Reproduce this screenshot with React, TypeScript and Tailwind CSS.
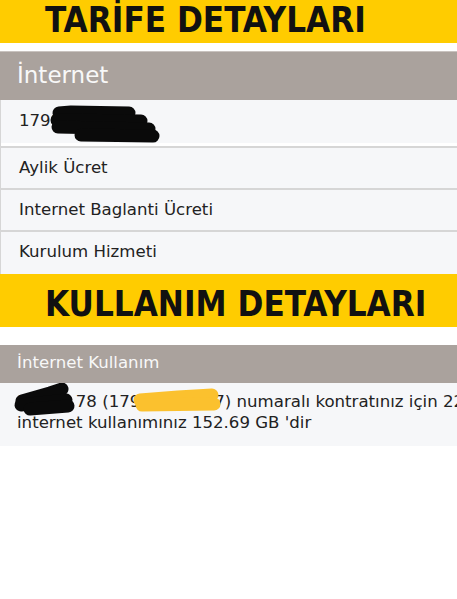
import React from "react";

const body = { fontFamily: '"DejaVu Sans", Verdana, sans-serif' };
const title = { fontFamily: '"DejaVu Sans Condensed", "DejaVu Sans", sans-serif', fontStretch: "condensed" as const };

function Row({ children, className = "" }: { children: React.ReactNode; className?: string }) {
  return (
    <div
      className={`relative box-border h-[42px] border-l border-[#d6d6d6] bg-[#f6f7f9] pl-[18px] pt-[12px] text-[16.6px] leading-none text-[#222] ${className}`}
    >
      {children}
    </div>
  );
}

export default function App() {
  return (
    <div className="h-[599px] w-[457px] overflow-hidden bg-white" style={body}>
      <div className="box-border h-[43px] bg-[#ffcc00] pl-[45px] pt-[3px]">
        <div className="text-[34.7px] font-bold leading-none text-[#111]" style={title}>
          TARİFE DETAYLARI
        </div>
      </div>
      <div className="h-[8px]" />
      <div className="box-border h-[49px] border-t border-[#c9c3bf] bg-[#aaa29d] pl-[17px] pt-[12px] text-[23px] leading-none text-[#f8f8f8]">
        İnternet
      </div>
      <Row className="h-[48px] border-b-2 pt-[13px] shadow-[inset_0_-3px_0_#ffffff]">
        <span>1790000000</span>
        <svg className="absolute left-0 top-0" width="200" height="48" viewBox="0 0 200 48">
          <g stroke="#0a0a0a" strokeWidth="13" strokeLinecap="round" strokeLinejoin="round" fill="none">
            <path d="M58 13 L70 12 L128 13" />
            <path d="M56 20 L140 21" />
            <path d="M57 27 L148 29" />
            <path d="M80 35 L152 36" />
          </g>
        </svg>
      </Row>
      <Row className="border-b-2">Aylik Ücret</Row>
      <Row className="border-b-2 pt-[11px]">Internet Baglanti Ücreti</Row>
      <Row>Kurulum Hizmeti</Row>
      <div className="box-border h-[53px] bg-[#ffcc00] pl-[45px] pt-[13px]">
        <div className="text-[34.7px] font-bold leading-none text-[#111]" style={title}>
          KULLANIM DETAYLARI
        </div>
      </div>
      <div className="h-[18px]" />
      <div className="box-border h-[38px] bg-[#aaa29d] pl-[17px] pt-[10px] text-[16.6px] leading-none text-[#f8f8f8]">
        İnternet Kullanım
      </div>
      <div className="relative box-border h-[63px] overflow-hidden bg-[#f6f7f9] pl-[17px] pt-[8px] text-[16.6px] leading-[21px] text-[#222]">
        <div className="whitespace-nowrap">
          12345<span className="ml-[6px]">78 (17900000007) numaralı kontratınız için 22</span>
        </div>
        <div className="whitespace-nowrap">internet kullanımınız 152.69 GB 'dir</div>
        <svg className="absolute left-0 top-0" width="240" height="40" viewBox="0 0 240 40">
          <g stroke="#0a0a0a" strokeWidth="13" strokeLinecap="round" strokeLinejoin="round" fill="none">
            <path d="M22 18 L50 10 L62 6" />
            <path d="M21 22 L66 17" />
            <path d="M30 26 L68 23" />
          </g>
          <g stroke="#fbc12e" strokeWidth="13" strokeLinecap="round" strokeLinejoin="round" fill="none">
            <path d="M140 17 L178 14 L212 12" />
            <path d="M142 22 L214 21" />
          </g>
        </svg>
      </div>
    </div>
  );
}
